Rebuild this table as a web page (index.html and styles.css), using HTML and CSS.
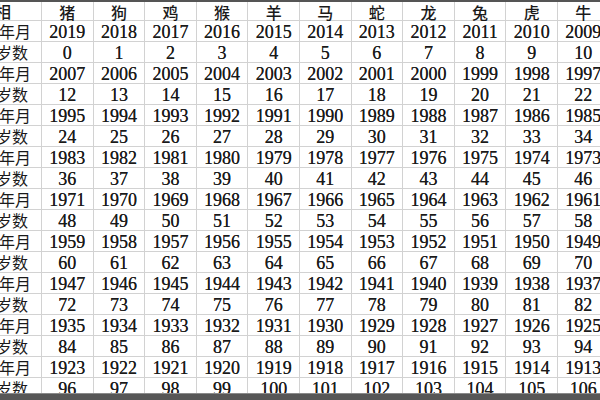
FILE: index.html
```html
<!DOCTYPE html>
<html lang="zh">
<head>
<meta charset="utf-8">
<title>生肖年龄对照表</title>
<link rel="stylesheet" href="styles.css">
</head>
<body>
<div class="sheet">
  <div class="topbar"></div>
  <div class="grid" id="grid">
    <div class="cell label lab-head"><span>属相</span></div>
    <div class="cell head">猪</div><div class="cell head">狗</div><div class="cell head">鸡</div><div class="cell head">猴</div><div class="cell head">羊</div><div class="cell head">马</div><div class="cell head">蛇</div><div class="cell head">龙</div><div class="cell head">兔</div><div class="cell head">虎</div><div class="cell head">牛</div>

    <div class="cell label lab-year"><span>出生年月</span></div>
    <div class="cell num">2019</div><div class="cell num">2018</div><div class="cell num">2017</div><div class="cell num">2016</div><div class="cell num">2015</div><div class="cell num">2014</div><div class="cell num">2013</div><div class="cell num">2012</div><div class="cell num">2011</div><div class="cell num">2010</div><div class="cell num">2009</div>
    <div class="cell label lab-age"><span>岁数</span></div>
    <div class="cell num">0</div><div class="cell num">1</div><div class="cell num">2</div><div class="cell num">3</div><div class="cell num">4</div><div class="cell num">5</div><div class="cell num">6</div><div class="cell num">7</div><div class="cell num">8</div><div class="cell num">9</div><div class="cell num">10</div>

    <div class="cell label lab-year"><span>出生年月</span></div>
    <div class="cell num">2007</div><div class="cell num">2006</div><div class="cell num">2005</div><div class="cell num">2004</div><div class="cell num">2003</div><div class="cell num">2002</div><div class="cell num">2001</div><div class="cell num">2000</div><div class="cell num">1999</div><div class="cell num">1998</div><div class="cell num">1997</div>
    <div class="cell label lab-age"><span>岁数</span></div>
    <div class="cell num">12</div><div class="cell num">13</div><div class="cell num">14</div><div class="cell num">15</div><div class="cell num">16</div><div class="cell num">17</div><div class="cell num">18</div><div class="cell num">19</div><div class="cell num">20</div><div class="cell num">21</div><div class="cell num">22</div>

    <div class="cell label lab-year"><span>出生年月</span></div>
    <div class="cell num">1995</div><div class="cell num">1994</div><div class="cell num">1993</div><div class="cell num">1992</div><div class="cell num">1991</div><div class="cell num">1990</div><div class="cell num">1989</div><div class="cell num">1988</div><div class="cell num">1987</div><div class="cell num">1986</div><div class="cell num">1985</div>
    <div class="cell label lab-age"><span>岁数</span></div>
    <div class="cell num">24</div><div class="cell num">25</div><div class="cell num">26</div><div class="cell num">27</div><div class="cell num">28</div><div class="cell num">29</div><div class="cell num">30</div><div class="cell num">31</div><div class="cell num">32</div><div class="cell num">33</div><div class="cell num">34</div>

    <div class="cell label lab-year"><span>出生年月</span></div>
    <div class="cell num">1983</div><div class="cell num">1982</div><div class="cell num">1981</div><div class="cell num">1980</div><div class="cell num">1979</div><div class="cell num">1978</div><div class="cell num">1977</div><div class="cell num">1976</div><div class="cell num">1975</div><div class="cell num">1974</div><div class="cell num">1973</div>
    <div class="cell label lab-age"><span>岁数</span></div>
    <div class="cell num">36</div><div class="cell num">37</div><div class="cell num">38</div><div class="cell num">39</div><div class="cell num">40</div><div class="cell num">41</div><div class="cell num">42</div><div class="cell num">43</div><div class="cell num">44</div><div class="cell num">45</div><div class="cell num">46</div>

    <div class="cell label lab-year"><span>出生年月</span></div>
    <div class="cell num">1971</div><div class="cell num">1970</div><div class="cell num">1969</div><div class="cell num">1968</div><div class="cell num">1967</div><div class="cell num">1966</div><div class="cell num">1965</div><div class="cell num">1964</div><div class="cell num">1963</div><div class="cell num">1962</div><div class="cell num">1961</div>
    <div class="cell label lab-age"><span>岁数</span></div>
    <div class="cell num">48</div><div class="cell num">49</div><div class="cell num">50</div><div class="cell num">51</div><div class="cell num">52</div><div class="cell num">53</div><div class="cell num">54</div><div class="cell num">55</div><div class="cell num">56</div><div class="cell num">57</div><div class="cell num">58</div>

    <div class="cell label lab-year"><span>出生年月</span></div>
    <div class="cell num">1959</div><div class="cell num">1958</div><div class="cell num">1957</div><div class="cell num">1956</div><div class="cell num">1955</div><div class="cell num">1954</div><div class="cell num">1953</div><div class="cell num">1952</div><div class="cell num">1951</div><div class="cell num">1950</div><div class="cell num">1949</div>
    <div class="cell label lab-age"><span>岁数</span></div>
    <div class="cell num">60</div><div class="cell num">61</div><div class="cell num">62</div><div class="cell num">63</div><div class="cell num">64</div><div class="cell num">65</div><div class="cell num">66</div><div class="cell num">67</div><div class="cell num">68</div><div class="cell num">69</div><div class="cell num">70</div>

    <div class="cell label lab-year"><span>出生年月</span></div>
    <div class="cell num">1947</div><div class="cell num">1946</div><div class="cell num">1945</div><div class="cell num">1944</div><div class="cell num">1943</div><div class="cell num">1942</div><div class="cell num">1941</div><div class="cell num">1940</div><div class="cell num">1939</div><div class="cell num">1938</div><div class="cell num">1937</div>
    <div class="cell label lab-age"><span>岁数</span></div>
    <div class="cell num">72</div><div class="cell num">73</div><div class="cell num">74</div><div class="cell num">75</div><div class="cell num">76</div><div class="cell num">77</div><div class="cell num">78</div><div class="cell num">79</div><div class="cell num">80</div><div class="cell num">81</div><div class="cell num">82</div>

    <div class="cell label lab-year"><span>出生年月</span></div>
    <div class="cell num">1935</div><div class="cell num">1934</div><div class="cell num">1933</div><div class="cell num">1932</div><div class="cell num">1931</div><div class="cell num">1930</div><div class="cell num">1929</div><div class="cell num">1928</div><div class="cell num">1927</div><div class="cell num">1926</div><div class="cell num">1925</div>
    <div class="cell label lab-age"><span>岁数</span></div>
    <div class="cell num">84</div><div class="cell num">85</div><div class="cell num">86</div><div class="cell num">87</div><div class="cell num">88</div><div class="cell num">89</div><div class="cell num">90</div><div class="cell num">91</div><div class="cell num">92</div><div class="cell num">93</div><div class="cell num">94</div>

    <div class="cell label lab-year"><span>出生年月</span></div>
    <div class="cell num">1923</div><div class="cell num">1922</div><div class="cell num">1921</div><div class="cell num">1920</div><div class="cell num">1919</div><div class="cell num">1918</div><div class="cell num">1917</div><div class="cell num">1916</div><div class="cell num">1915</div><div class="cell num">1914</div><div class="cell num">1913</div>
    <div class="cell label lab-age"><span>岁数</span></div>
    <div class="cell num">96</div><div class="cell num">97</div><div class="cell num">98</div><div class="cell num">99</div><div class="cell num">100</div><div class="cell num">101</div><div class="cell num">102</div><div class="cell num">103</div><div class="cell num">104</div><div class="cell num">105</div><div class="cell num">106</div>
  </div>
  <div class="bottombar"></div>
</div>
</body>
</html>
```

FILE: styles.css
```css
* { box-sizing: border-box; }
html, body { margin: 0; padding: 0; background: #fff; }
.sheet {
  width: 600px;
  height: 400px;
  overflow: hidden;
  display: flex;
  flex-direction: column;
  background: #fff;
}
.topbar {
  height: 2px;
  flex: none;
  background: #555;
}
.grid {
  height: 391px;
  flex: none;
  overflow: hidden;
  display: grid;
  grid-template-columns: 42px repeat(11, 51.6px);
  grid-template-rows: 19px;
  grid-auto-rows: 21px;
  width: 610px;
}
.bottombar {
  height: 7px;
  flex: none;
  background: #575757;
  border-top: 1px solid #8a8a8a;
}
.cell {
  border-right: 1px solid #d2d2d2;
  border-bottom: 1px solid #d2d2d2;
  display: flex;
  align-items: center;
  justify-content: center;
  color: #1a1a1a;
  white-space: nowrap;
  line-height: 1;
}
.num {
  font-family: "Liberation Serif", "DejaVu Serif", serif;
  font-size: 18px;
  padding-top: 1px;
  text-shadow: 0 0 0.6px #333;
}
.head {
  font-family: "Noto Sans CJK SC", "Noto Sans", sans-serif;
  font-size: 16px;
  font-weight: 500;
  padding-top: 1px;
}
.label {
  justify-content: flex-end;
  overflow: hidden;
  font-family: "Noto Sans CJK SC", "Noto Sans", sans-serif;
  font-size: 16px;
}
.lab-head { padding-right: 30px; font-weight: 500; }
.lab-year { padding-right: 10px; }
.lab-age { padding-right: 13px; }
```
